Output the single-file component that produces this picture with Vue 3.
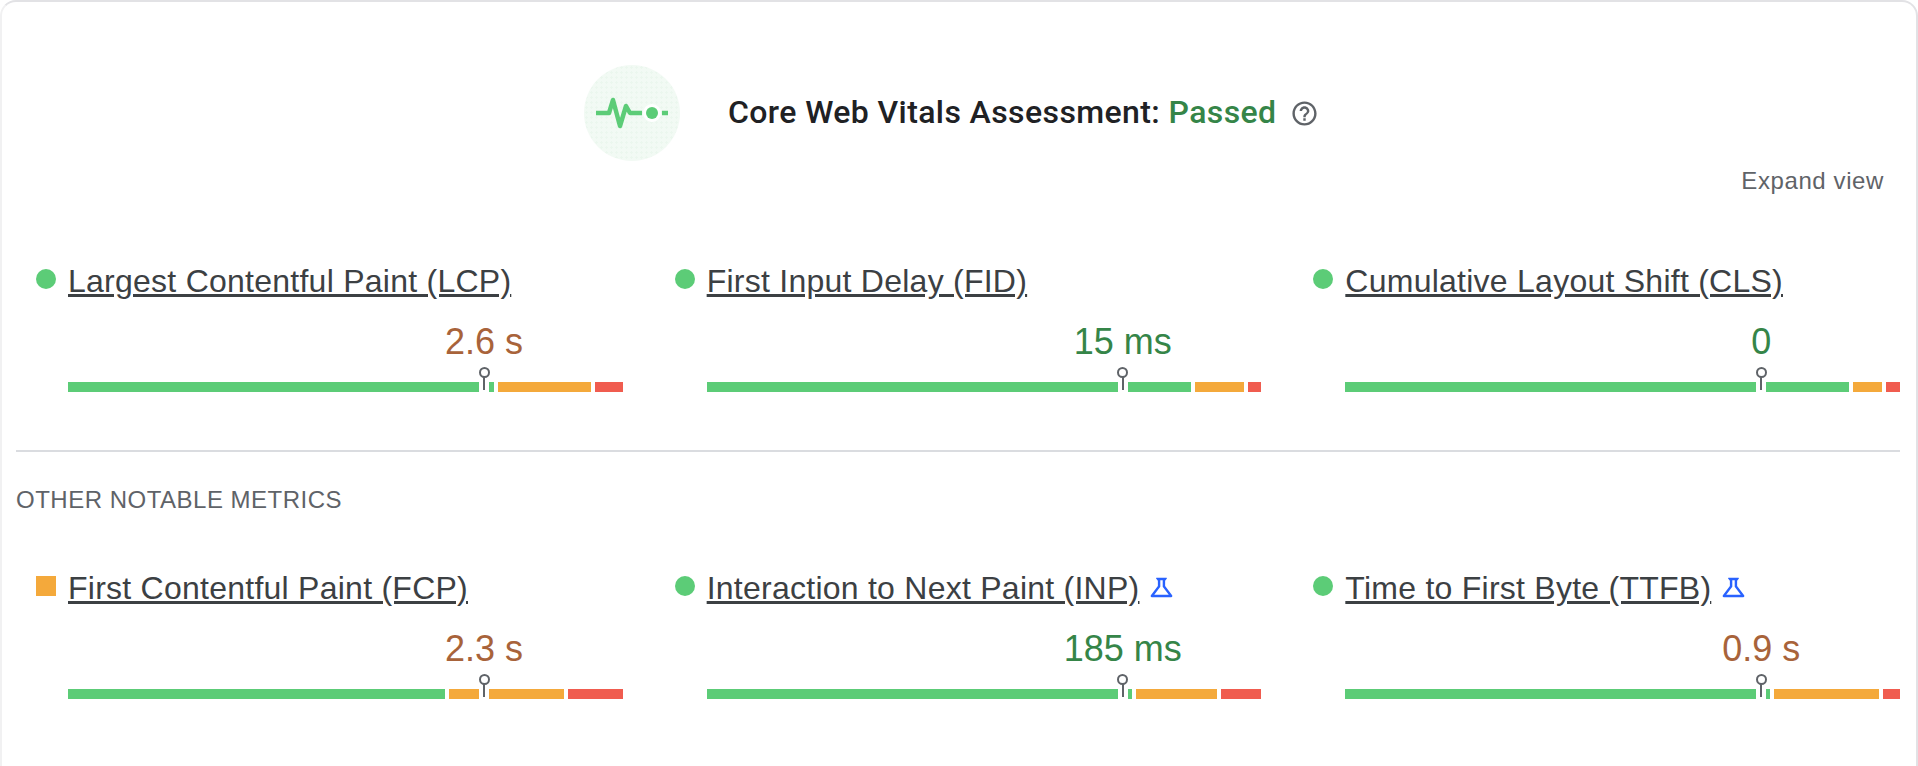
<script setup>
const GREEN = '#5ccc77'
const ORANGE = '#f4a93b'
const RED = '#f05c4f'

const topMetrics = [
  {
    name: 'Largest Contentful Paint (LCP)', value: '2.6 s', tone: 'avg', shape: 'dot', lab: false,
    before: [[GREEN, 411]], after: [[GREEN, 5], [ORANGE, 93], [RED, 28]]
  },
  {
    name: 'First Input Delay (FID)', value: '15 ms', tone: 'good', shape: 'dot', lab: false,
    before: [[GREEN, 411]], after: [[GREEN, 63], [ORANGE, 49], [RED, 13]]
  },
  {
    name: 'Cumulative Layout Shift (CLS)', value: '0', tone: 'good', shape: 'dot', lab: false,
    before: [[GREEN, 411]], after: [[GREEN, 83], [ORANGE, 29], [RED, 14]]
  }
]

const otherMetrics = [
  {
    name: 'First Contentful Paint (FCP)', value: '2.3 s', tone: 'avg', shape: 'square', lab: false,
    before: [[GREEN, 377], [ORANGE, 30]], after: [[ORANGE, 75], [RED, 55]]
  },
  {
    name: 'Interaction to Next Paint (INP)', value: '185 ms', tone: 'good', shape: 'dot', lab: true,
    before: [[GREEN, 411]], after: [[GREEN, 4], [ORANGE, 81], [RED, 40]]
  },
  {
    name: 'Time to First Byte (TTFB)', value: '0.9 s', tone: 'avg', shape: 'dot', lab: true,
    before: [[GREEN, 411]], after: [[GREEN, 4], [ORANGE, 105], [RED, 17]]
  }
]

// where the marker sits, counted from the left end of the bar
function markerLeft(metric) {
  const widths = metric.before.reduce((sum, seg) => sum + seg[1] + 4, 0)
  return widths + 1
}
</script>

<template>
  <div class="page">
    <div class="card">
      <header class="assessment">
        <div class="assessment__badge">
          <svg viewBox="0 0 96 96" width="96" height="96">
            <path d="M12 48H25L29 35L36 61L42 41L46 48H58" fill="none" stroke="#5ccc77" stroke-width="4.5" stroke-linejoin="round" />
            <circle cx="68" cy="48" r="9" fill="#fff" />
            <circle cx="68" cy="48" r="6" fill="#5ccc77" />
            <path d="M78 48H84" fill="none" stroke="#5ccc77" stroke-width="4.5" />
          </svg>
        </div>
        <h1 class="assessment__title">Core Web Vitals Assessment: <span class="assessment__status">Passed</span></h1>
        <svg class="assessment__help" viewBox="0 0 24 24" width="29" height="29">
          <path fill="#5f6368" d="M11 18h2v-2h-2v2zm1-16C6.48 2 2 6.48 2 12s4.48 10 10 10 10-4.48 10-10S17.52 2 12 2zm0 18c-4.41 0-8-3.59-8-8s3.59-8 8-8 8 3.59 8 8-3.59 8-8 8zm0-14c-2.21 0-4 1.79-4 4h2c0-1.1.9-2 2-2s2 .9 2 2c0 2-3 1.75-3 5h2c0-2.25 3-2.5 3-5 0-2.21-1.79-4-4-4z" />
        </svg>
      </header>

      <div class="expand">Expand view</div>

      <section class="metrics metrics--top">
        <div v-for="m in topMetrics" :key="m.name" class="metric">
          <span class="metric__icon" :class="`metric__icon--${m.shape}`"></span>
          <div class="metric__body">
            <div class="metric__head">
              <a class="metric__name">{{ m.name }}</a>
            </div>
            <div class="metric__value" :class="`metric__value--${m.tone}`" :style="{ marginLeft: markerLeft(m) + 'px' }">{{ m.value }}</div>
            <div class="bar">
              <span v-for="(seg, i) in m.before" :key="i" class="bar__seg" :style="{ background: seg[0], width: seg[1] + 'px' }"></span>
              <span class="bar__marker"></span>
              <span v-for="(seg, i) in m.after" :key="'a' + i" class="bar__seg" :style="{ background: seg[0], width: seg[1] + 'px' }"></span>
            </div>
          </div>
        </div>
      </section>

      <hr class="divider">
      <h2 class="other-title">OTHER NOTABLE METRICS</h2>

      <section class="metrics">
        <div v-for="m in otherMetrics" :key="m.name" class="metric">
          <span class="metric__icon" :class="`metric__icon--${m.shape}`"></span>
          <div class="metric__body">
            <div class="metric__head">
              <a class="metric__name">{{ m.name }}</a>
              <svg v-if="m.lab" class="metric__lab" viewBox="0 0 24 24" width="29" height="29">
                <path fill="#2962ff" d="M13 11.33L18 18H6l5-6.67V6h2m2.96-2H8.04c-.42 0-.65.48-.39.81L9 6.5v4.17L3.2 18.4c-.49.66-.02 1.6.8 1.6h16c.82 0 1.29-.94.8-1.6L15 10.67V6.5l1.35-1.69c.26-.33.03-.81-.39-.81z" />
              </svg>
            </div>
            <div class="metric__value" :class="`metric__value--${m.tone}`" :style="{ marginLeft: markerLeft(m) + 'px' }">{{ m.value }}</div>
            <div class="bar">
              <span v-for="(seg, i) in m.before" :key="i" class="bar__seg" :style="{ background: seg[0], width: seg[1] + 'px' }"></span>
              <span class="bar__marker"></span>
              <span v-for="(seg, i) in m.after" :key="'a' + i" class="bar__seg" :style="{ background: seg[0], width: seg[1] + 'px' }"></span>
            </div>
          </div>
        </div>
      </section>
    </div>
  </div>
</template>

<style scoped>
.page {
  height: 766px;
  overflow: hidden;
}

.card {
  box-sizing: border-box;
  width: 1918px;
  height: 800px;
  background: #fff;
  border: 2px solid #e2e2e5;
  border-left-color: #f1f1f2;
  border-radius: 16px;
  padding-top: 63px;
  font-family: "Liberation Sans", Arial, sans-serif;
}

.assessment {
  display: flex;
  align-items: center;
  padding-left: 582px;
}

.assessment__badge {
  width: 96px;
  height: 96px;
  border-radius: 50%;
  background: radial-gradient(#ebf7ee 1px, transparent 1.2px) 0 0 / 5px 5px, #f2faf4;
  margin-right: 48px;
}

.assessment__badge svg {
  display: block;
}

.assessment__title {
  margin: 0 0 2px;
  font-family: Roboto, sans-serif;
  font-size: 32px;
  font-weight: 500;
  letter-spacing: 0.4px;
  color: #202124;
  white-space: pre;
}

.assessment__status {
  color: #358548;
}

.assessment__help {
  margin-left: 13px;
}

.expand {
  margin-top: 7px;
  padding-right: 32px;
  text-align: right;
  font-size: 24px;
  line-height: 26px;
  letter-spacing: 0.6px;
  color: #5f6368;
}

.metrics {
  display: grid;
  grid-template-columns: repeat(3, 1fr);
  column-gap: 50px;
  padding: 0 14px 0 34px;
}

.metrics--top {
  margin-top: 69px;
}

.metric {
  display: flex;
  gap: 12px;
}

.metric__icon {
  flex: none;
  width: 20px;
  height: 20px;
  margin-top: 6px;
  background: #5ccc77;
}

.metric__icon--dot {
  border-radius: 50%;
}

.metric__icon--square {
  background: #f4a93b;
}

.metric__body {
  flex: 1;
  min-width: 0;
}

.metric__head {
  display: flex;
  align-items: center;
  height: 34px;
}

.metric__name {
  margin-top: 2px;
  font-size: 32px;
  line-height: 34px;
  letter-spacing: 0.25px;
  color: #3c4043;
  text-decoration: underline;
  text-underline-offset: 2px;
  white-space: nowrap;
}

.metric__lab {
  margin-left: 8px;
}

.metric__value {
  width: fit-content;
  margin-top: 24px;
  transform: translateX(-50%);
  font-size: 36px;
  line-height: 42px;
  white-space: nowrap;
}

.metric__value--avg {
  color: #a8633a;
}

.metric__value--good {
  color: #358548;
}

.bar {
  display: flex;
  gap: 4px;
  height: 10px;
  margin-top: 19px;
}

.bar__seg {
  display: block;
  flex: none;
  height: 100%;
}

.bar__marker {
  position: relative;
  flex: none;
  width: 2px;
}

.bar__marker::before {
  content: "";
  position: absolute;
  left: 0;
  top: -5px;
  width: 2px;
  height: 13px;
  background: #5f6368;
}

.bar__marker::after {
  content: "";
  position: absolute;
  left: -4.5px;
  top: -15px;
  box-sizing: border-box;
  width: 11px;
  height: 11px;
  border: 2px solid #5f6368;
  border-radius: 50%;
  background: #fff;
}

.divider {
  height: 2px;
  margin: 58px 16px 0 14px;
  border: 0;
  background: #dadce0;
}

.other-title {
  margin: 35px 0 0 14px;
  font-size: 24px;
  font-weight: 400;
  line-height: 26px;
  letter-spacing: 0.5px;
  color: #5f6368;
}

.other-title + .metrics {
  margin-top: 57px;
}
</style>

<style>
html, body {
  background: #fff;
}
</style>
